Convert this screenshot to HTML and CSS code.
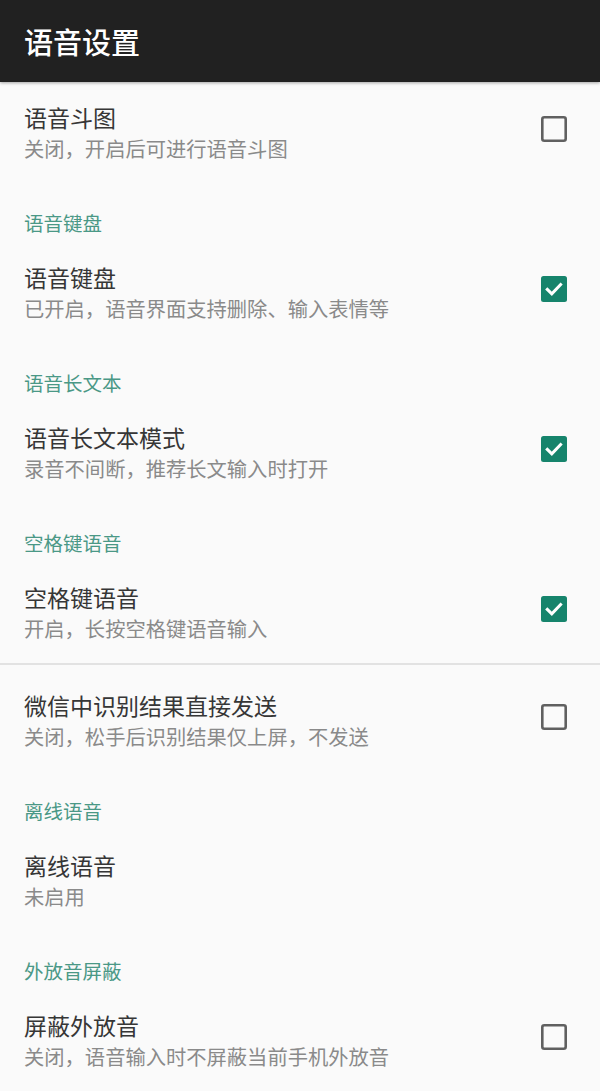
FILE: index.html
```html
<!DOCTYPE html>
<html lang="zh-CN">
<head>
<meta charset="utf-8">
<title>语音设置</title>
<link rel="stylesheet" href="styles.css">
</head>
<body>
<header class="appbar"><h1 class="appbar-title">语音设置</h1></header>
<main class="list">
  <div class="pref">
    <div class="pref-text"><div class="pref-title">语音斗图</div><div class="pref-sub">关闭，开启后可进行语音斗图</div></div>
    <svg class="cb" viewBox="0 0 26 26"><rect x="1.3" y="1.3" width="23.4" height="23.4" rx="2" class="cb-off"/></svg>
  </div>
  <div class="cat">语音键盘</div>
  <div class="pref">
    <div class="pref-text"><div class="pref-title">语音键盘</div><div class="pref-sub">已开启，语音界面支持删除、输入表情等</div></div>
    <svg class="cb" viewBox="0 0 26 26"><rect x="0" y="0" width="26" height="26" rx="2.5" class="cb-on"/><path d="M6.3 13.4 L10.8 17.8 L19.6 8.6" class="cb-tick"/></svg>
  </div>
  <div class="cat">语音长文本</div>
  <div class="pref">
    <div class="pref-text"><div class="pref-title">语音长文本模式</div><div class="pref-sub">录音不间断，推荐长文输入时打开</div></div>
    <svg class="cb" viewBox="0 0 26 26"><rect x="0" y="0" width="26" height="26" rx="2.5" class="cb-on"/><path d="M6.3 13.4 L10.8 17.8 L19.6 8.6" class="cb-tick"/></svg>
  </div>
  <div class="cat">空格键语音</div>
  <div class="pref">
    <div class="pref-text"><div class="pref-title">空格键语音</div><div class="pref-sub">开启，长按空格键语音输入</div></div>
    <svg class="cb" viewBox="0 0 26 26"><rect x="0" y="0" width="26" height="26" rx="2.5" class="cb-on"/><path d="M6.3 13.4 L10.8 17.8 L19.6 8.6" class="cb-tick"/></svg>
  </div>
  <div class="divider"></div>
  <div class="pref pref-after-divider">
    <div class="pref-text"><div class="pref-title">微信中识别结果直接发送</div><div class="pref-sub">关闭，松手后识别结果仅上屏，不发送</div></div>
    <svg class="cb" viewBox="0 0 26 26"><rect x="1.3" y="1.3" width="23.4" height="23.4" rx="2" class="cb-off"/></svg>
  </div>
  <div class="cat">离线语音</div>
  <div class="pref">
    <div class="pref-text"><div class="pref-title">离线语音</div><div class="pref-sub">未启用</div></div>
  </div>
  <div class="cat">外放音屏蔽</div>
  <div class="pref">
    <div class="pref-text"><div class="pref-title">屏蔽外放音</div><div class="pref-sub">关闭，语音输入时不屏蔽当前手机外放音</div></div>
    <svg class="cb" viewBox="0 0 26 26"><rect x="1.3" y="1.3" width="23.4" height="23.4" rx="2" class="cb-off"/></svg>
  </div>
</main>
</body>
</html>
```

FILE: styles.css
```css
* { box-sizing: border-box; }
html, body { margin: 0; padding: 0; }
body {
  width: 600px;
  height: 1091px;
  overflow: hidden;
  background: #fafafa;
  font-family: "Noto Sans CJK SC", "Noto Sans", Roboto, sans-serif;
}
.appbar {
  height: 82px;
  background: #212121;
  display: flex;
  align-items: center;
  padding-left: 24px;
  box-shadow: 0 1px 3px rgba(0,0,0,0.35);
  position: relative;
  z-index: 1;
}
.appbar-title {
  margin: 0;
  color: #ffffff;
  font-size: 29px;
  font-weight: 500;
  line-height: 36px;
}
.list { display: flex; flex-direction: column; }
.pref {
  display: flex;
  align-items: center;
  padding: 19px 33px 21px 24px;
}
.pref-after-divider { padding-top: 24px; }
.pref-text { flex: 1; min-width: 0; }
.pref-title {
  font-size: 23px;
  line-height: 32px;
  color: #363636;
}
.pref-sub {
  margin-top: 1px;
  font-size: 20.3px;
  line-height: 28px;
  color: #8a8a8a;
}
.cat {
  padding: 27px 24px 6px;
  font-size: 19.5px;
  line-height: 26px;
  color: #4a9886;
}
.divider {
  height: 2px;
  background: #e2e2e2;
}
.cb {
  width: 26px;
  height: 26px;
  flex: none;
  margin-top: -2px;
  margin-bottom: 3px;
}
.cb-off { fill: none; stroke: #606060; stroke-width: 2.6; }
.cb-on { fill: #16846c; }
.cb-tick { fill: none; stroke: #ffffff; stroke-width: 3; stroke-linecap: square; stroke-linejoin: miter; }
```
